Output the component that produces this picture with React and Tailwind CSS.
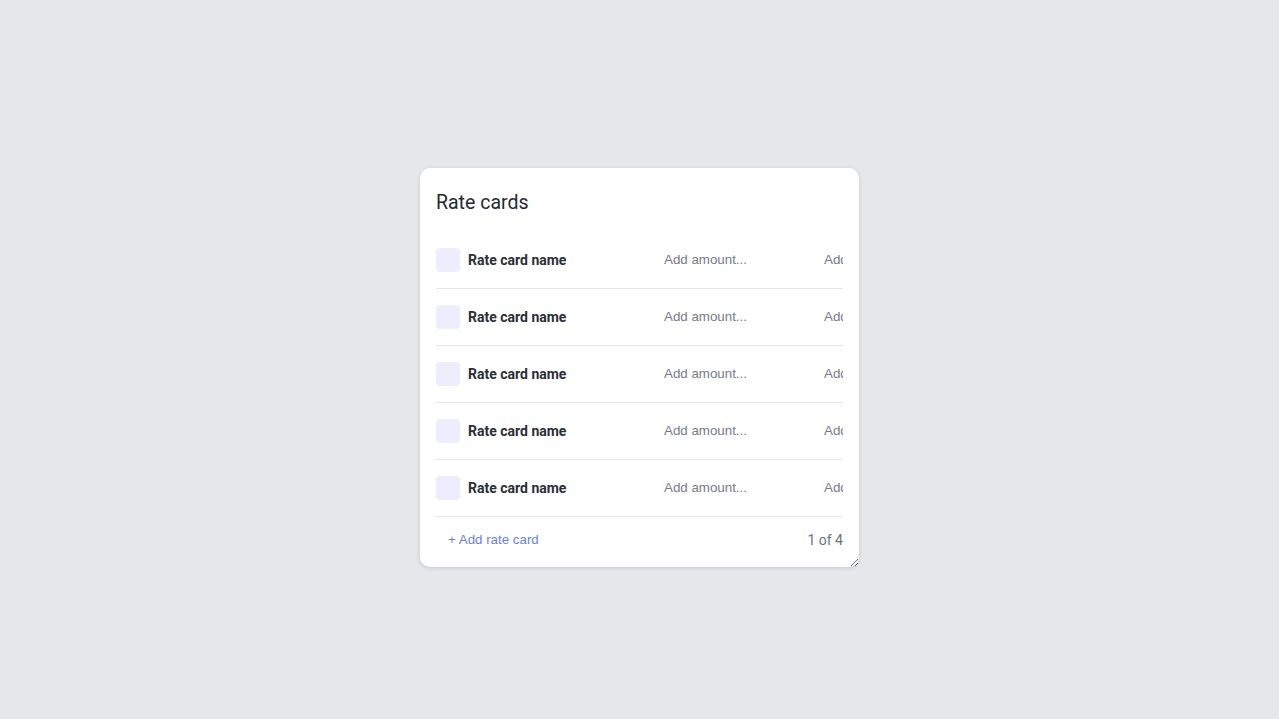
import React from "react";

const rows = [1, 2, 3, 4, 5];

export default function App() {
  return (
    <div className="min-h-screen w-full bg-[#e5e7eb] flex justify-center pt-[168px]" style={{ fontFamily: "Roboto, sans-serif" }}>
      <div className="w-[439px] h-[399px] bg-white rounded-[10px] shadow-[0_1px_4px_rgba(0,0,0,0.15)] resize overflow-auto px-4 pt-[21px] flex flex-col">
        <h2 className="text-[19.5px] leading-7 text-[#24292f] mb-[15px]" style={{ fontFamily: "Roboto, sans-serif" }}>Rate cards</h2>
        <div className="flex flex-col">
          {rows.map((r) => (
            <div key={r} className="h-[57px] border-b border-[#e5e7eb] flex items-center overflow-hidden">
              <div className="w-6 h-6 rounded bg-[#ededfd] shrink-0" />
              <div className="w-[180px] shrink-0 ml-2 text-[14px] font-bold text-[#2a2f36]">Rate card name</div>
              <input
                className="ml-4 w-[144px] shrink-0 text-[13.333px] text-[#374151] placeholder-[#757b85] outline-none bg-transparent"
                style={{ fontFamily: "'Liberation Sans', Arial, sans-serif" }}
                placeholder="Add amount..."
              />
              <input
                className="ml-4 w-[144px] shrink-0 text-[13.333px] text-[#374151] placeholder-[#757b85] outline-none bg-transparent"
                style={{ fontFamily: "'Liberation Sans', Arial, sans-serif" }}
                placeholder="Add amount..."
              />
            </div>
          ))}
        </div>
        <div className="flex items-center justify-between pt-[13px]">
          <button
            className="px-3 text-[13.333px] leading-5 text-[#6b7fe0]"
            style={{ fontFamily: "'Liberation Sans', Arial, sans-serif" }}
          >
            + Add rate card
          </button>
          <span className="text-[14px] leading-5 text-[#6b7280]">1 of 4</span>
        </div>
      </div>
    </div>
  );
}
